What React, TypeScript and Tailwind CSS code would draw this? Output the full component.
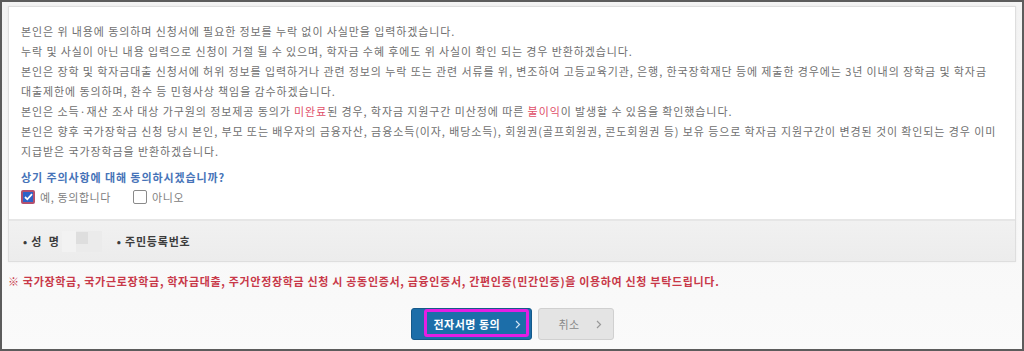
import React from "react";

const font = { fontFamily: '"Noto Sans CJK KR", "Noto Sans", sans-serif' };

function Chevron({ color }: { color: string }) {
  return (
    <svg width="6" height="9" viewBox="0 0 6 9" fill="none">
      <path d="M1 1l3.5 3.5L1 8" stroke={color} strokeWidth="1.2" />
    </svg>
  );
}

export default function App() {
  const lines: React.ReactNode[] = [
    "본인은 위 내용에 동의하며 신청서에 필요한 정보를 누락 없이 사실만을 입력하겠습니다.",
    "누락 및 사실이 아닌 내용 입력으로 신청이 거절 될 수 있으며, 학자금 수혜 후에도 위 사실이 확인 되는 경우 반환하겠습니다.",
    "본인은 장학 및 학자금대출 신청서에 허위 정보를 입력하거나 관련 정보의 누락 또는 관련 서류를 위, 변조하여 고등교육기관, 은행, 한국장학재단 등에 제출한 경우에는 3년 이내의 장학금 및 학자금",
    "대출제한에 동의하며, 환수 등 민형사상 책임을 감수하겠습니다.",
    <>
      본인은 소득·재산 조사 대상 가구원의 정보제공 동의가 <span className="text-[#e0506a]">미완료</span>된 경우, 학자금 지원구간 미산정에 따른{" "}
      <span className="text-[#e0506a]">불이익</span>이 발생할 수 있음을 확인했습니다.
    </>,
    "본인은 향후 국가장학금 신청 당시 본인, 부모 또는 배우자의 금융자산, 금융소득(이자, 배당소득), 회원권(골프회원권, 콘도회원권 등) 보유 등으로 학자금 지원구간이 변경된 것이 확인되는 경우 이미",
    "지급받은 국가장학금을 반환하겠습니다.",
  ];

  return (
    <div
      style={font}
      className="w-[1024px] h-[351px] overflow-hidden border-2 border-[#5c5c5c] bg-gradient-to-b from-[#f3f3f3] to-[#fafafa] px-[6px] pt-[4px]"
    >
      {/* 동의 박스 */}
      <div className="border border-[#dedede] bg-white shadow-[0_0_2px_rgba(0,0,0,0.06)]">
        <div className="px-[12px] pt-[14px] pb-[12px]">
          <div className="text-[11px] leading-[20px] text-[#707070] tracking-[0.9px]">
            {lines.map((l, i) => (
              <div key={i} className="whitespace-nowrap">
                {l}
              </div>
            ))}
          </div>
          <div className="mt-[6px] text-[11px] leading-[20px] font-bold text-[#4673b8] tracking-[0.9px]">
            상기 주의사항에 대해 동의하시겠습니까?
          </div>
          <div className="flex items-center h-[20px] text-[11px] text-[#808080] tracking-[0.6px]">
            <span className="w-[14px] h-[14px] rounded-[2px] border-2 border-[#b3506e] bg-[#2d63c8] flex items-center justify-center">
              <svg width="9" height="8" viewBox="0 0 9 8" fill="none">
                <path d="M1 4l2.3 2.3L8 1.2" stroke="white" strokeWidth="1.8" />
              </svg>
            </span>
            <span className="ml-[5px]">예, 동의합니다</span>
            <span className="ml-[22px] w-[14px] h-[14px] rounded-[2px] border border-[#8a8a8a] bg-white" />
            <span className="ml-[5px]">아니오</span>
          </div>
        </div>
        <div className="h-[42px] border-t-2 border-[#e6e6e6] bg-gradient-to-b from-[#f1f1f1] to-[#ececec] flex items-center pl-[14px] text-[11px] font-bold text-[#3c3c3c] tracking-[0.8px]">
          <span>
            • 성&nbsp;&nbsp;명
          </span>
          <span className="ml-[2px] w-[40px] h-[21px] bg-[#ebebeb] flex">
            <span className="w-[14px] h-full bg-[#f2f2f2]" />
            <span className="w-[12px] h-[12px] mt-[1px] bg-[#dedede]" />
          </span>
          <span className="ml-[15px]">• 주민등록번호</span>
        </div>
      </div>

      {/* 안내 문구 */}
      <div className="mt-[9px] text-[11px] leading-[20px] font-bold text-[#c83848] whitespace-nowrap tracking-[0.68px]">
        ※ 국가장학금, 국가근로장학금, 학자금대출, 주거안정장학금 신청 시 공동인증서, 금융인증서, 간편인증(민간인증)을 이용하여 신청 부탁드립니다.
      </div>

      {/* 버튼 */}
      <div className="mt-[17px] flex justify-center gap-[6px]">
        <button className="relative w-[121px] h-[32px] rounded-[3px] bg-[#1c6ea9] border border-[#15598a] flex items-center text-white text-[11px] font-bold tracking-[0.5px]">
          <span className="ml-[22px]">전자서명 동의</span>
          <span className="ml-auto mr-[10px]">
            <Chevron color="#cfe3f3" />
          </span>
          <span className="absolute left-[12px] right-[2px] top-[0px] bottom-[2px] border-[3px] border-[#e41ee4] rounded-[3px]" />
        </button>
        <button className="w-[76px] h-[32px] rounded-[3px] bg-[#e4e4e4] border border-[#d0d0d0] flex items-center text-[#888] text-[11px] tracking-[0.5px]">
          <span className="ml-[20px]">취소</span>
          <span className="ml-auto mr-[11px]">
            <Chevron color="#999" />
          </span>
        </button>
      </div>
    </div>
  );
}
